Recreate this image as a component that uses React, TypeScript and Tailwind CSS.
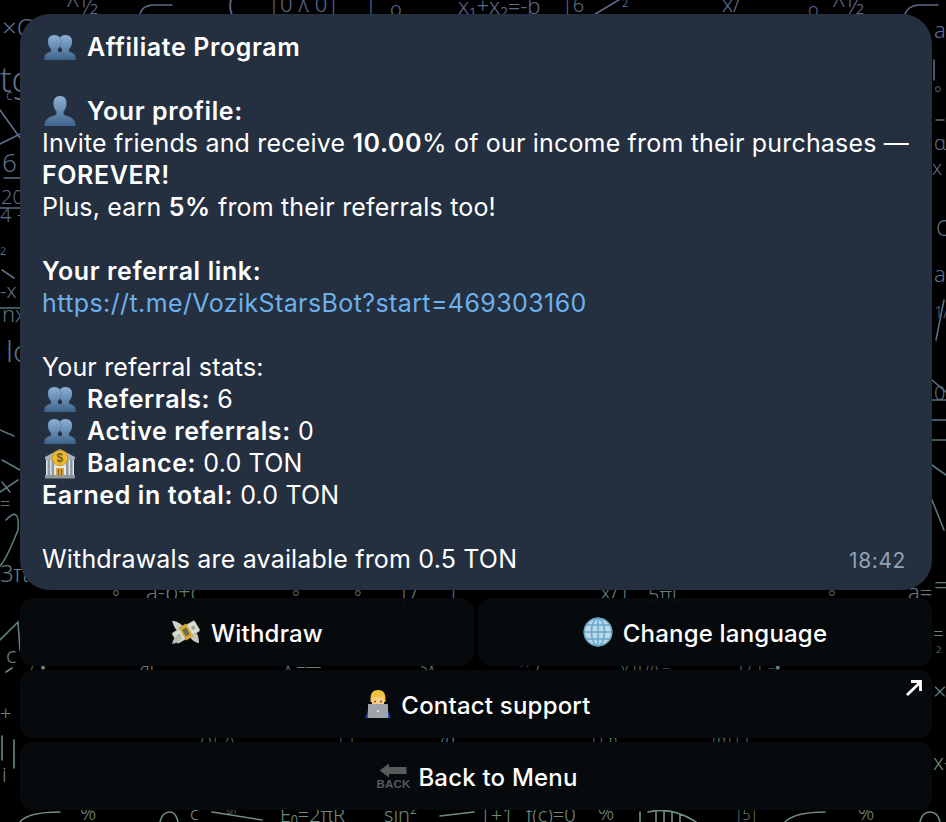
import React from 'react';

const FONT = "font-['Inter','Liberation_Sans',sans-serif]";

// [x, y, text, size]
const doodleTexts: [number, number, string, number][] = [
  [66, 14, '^½ˉ', 24], [228, 14, '(', 30], [268, 12, '|0 λ 0|', 22], [358, 10, '⁻|', 22],
  [390, 16, 'o', 20], [458, 14, 'x₁+x₂=-b', 22], [562, 12, '|6', 20], [622, 14, '²', 18],
  [722, 12, 'x/', 22], [808, 16, 'o', 18], [832, 14, '^½ˉ', 24],
  [2, 37, '×O', 26], [0, 92, 'tg', 34], [6, 100, 'c', 14], [2, 172, '6', 26],
  [1, 204, '20', 20], [0, 222, '4 +', 20], [0, 262, '²', 18], [0, 298, '-x', 20],
  [2, 322, 'nx', 22], [6, 362, 'lo', 30], [0, 582, '3π', 24], [0, 510, '=', 18],
  [6, 663, 'c', 22], [0, 720, '+', 20], [2, 782, 'i', 20],
  [934, 38, 'a', 22], [934, 100, '°', 18], [934, 150, 'ɑ', 20], [932, 175, 'x', 20],
  [936, 236, 'C', 22], [934, 282, 'a', 22], [934, 318, '1/', 16], [934, 400, '0', 20],
  [934, 594, '=b', 24], [933, 640, '=', 18], [936, 660, '²', 16], [933, 700, '×', 24],
  [933, 770, 'x-', 22], [112, 604, '°', 18], [146, 600, 'a-b+c', 22], [292, 604, '°', 18],
  [354, 604, '°', 18], [398, 602, '|/', 22], [448, 600, '|ʼ', 20], [600, 600, 'x/|ʼʼ', 22],
  [648, 602, '5πL', 20], [828, 604, '°', 18], [908, 600, 'a=', 22],
  [30, 672, '/ʼ ▪.', 14], [140, 672, 'ar', 18], [284, 672, 'x =—', 16], [420, 672, 'sx', 16],
  [520, 672, '^ ʼ/', 16], [620, 672, '\\/ ɑ /Λ.=', 14], [740, 672, '( / | =▪', 14],
  [200, 745, '/ɔ| ʼ/\\ʼ', 14], [330, 745, '. | |', 14], [440, 745, '/ɑ', 16], [590, 745, '|| b', 14],
  [710, 745, '|ɑ||ʼ|', 14], [80, 820, '%', 20], [190, 820, 'c', 18], [222, 818, '⁻ˢⁿ', 14],
  [280, 822, 'E₀=2πR', 20], [384, 822, 'sin²', 20], [480, 822, '|+1', 20], [526, 822, 'f(c)=0', 20],
  [598, 820, '%', 20], [735, 820, '|5|', 14], [858, 820, '%', 20],
];

const doodlePaths = [
  'M140 14 Q142 6 152 5 L172 5', 'M905 14 Q908 6 918 5 L938 5', 'M582 22 L622 -2',
  'M0 110 L20 138', 'M0 144 L20 134', 'M4 178 L20 178', 'M0 208 L22 208', 'M2 270 L14 278', 'M0 308 L20 308',
  'M2 460 L20 470', 'M2 482 L10 492 M0 492 L18 480', 'M6 520 Q20 505 18 530 Q6 560 0 566', 'M0 430 L14 436',
  'M0 640 L18 622 L20 650 M6 672 L12 668', 'M2 736 V760 M14 740 V768',
  'M20 822 Q28 812 60 812 M785 822 Q795 812 825 812',
  'M160 822 Q162 812 170 812 Q176 812 178 822', 'M920 822 Q922 812 930 812 Q938 812 940 822', 'M212 812 L262 820',
  'M440 816 L474 812', 'M640 812 V822 M648 812 Q672 806 696 822 M656 812 V822 M664 812 V822 M672 812 V822 M680 814 V822',
  'M932 380 L946 392 M932 400 H946 M932 420 H946 M932 440 H946 M932 465 L946 475 M932 500 L944 530',
  'M934 60 V80 M936 120 H944 M936 340 L944 300',
];

function Doodles() {
  return (
    <svg className="absolute inset-0 w-full h-full" viewBox="0 0 946 822" fill="none">
      <defs>
        <linearGradient id="dg" gradientUnits="userSpaceOnUse" x1="0" y1="0" x2="0" y2="822">
          <stop offset="0" stopColor="#5d6b8c" />
          <stop offset="0.5" stopColor="#567282" />
          <stop offset="1" stopColor="#6f8f80" />
        </linearGradient>
      </defs>
      {doodlePaths.map((d, i) => (
        <path key={i} d={d} stroke="url(#dg)" strokeWidth="1.6" strokeLinecap="round" />
      ))}
      {doodleTexts.map(([x, y, t, s], i) => (
        <text key={i} x={x} y={y} fontSize={s} fontFamily="Noto Sans, sans-serif" fontWeight="300" fill="url(#dg)">
          {t}
        </text>
      ))}
    </svg>
  );
}

const Emoji = ({ children }: { children: React.ReactNode }) => (
  <svg viewBox="0 0 32 32" className="inline-block w-[32px] h-[32px] align-[-7px] mr-[11px] ml-[2px]">
    {children}
  </svg>
);

const bustPath = 'M10.5 4 C5 4 3.5 8 4 12 C4.4 15 5.5 16.6 7 18 L7 20.4 C4.5 21.6 1.2 22 0.6 25 L0.4 29 H20.6 L20.4 25 C19.8 22 16.5 21.6 14 20.4 L14 18 C15.5 16.6 16.6 15 17 12 C17.5 8 16 4 10.5 4Z';

function BustsIcon({ id }: { id: string }) {
  return (
    <Emoji>
      <defs>
        <linearGradient id={id} x1="0" y1="0" x2="0" y2="1">
          <stop offset="0" stopColor="#8db2d6" />
          <stop offset="1" stopColor="#3f648c" />
        </linearGradient>
      </defs>
      <path d={bustPath} fill={`url(#${id})`} transform="translate(11 0)" />
      <path d={bustPath} fill={`url(#${id})`} stroke="#34506f" strokeWidth="0.3" />
    </Emoji>
  );
}

function BustIcon() {
  return (
    <Emoji>
      <defs>
        <linearGradient id="one" x1="0" y1="0" x2="0" y2="1">
          <stop offset="0" stopColor="#8db2d6" />
          <stop offset="1" stopColor="#3f648c" />
        </linearGradient>
      </defs>
      <path
        d="M16 1 C10.5 1 9 5.5 9.6 10 C10 13 11 15 12.4 16.4 L12.4 19.5 C8 21.5 2.5 22.5 1 27 L0.4 31 H31.6 L31 27 C29.5 22.5 24 21.5 19.6 19.5 L19.6 16.4 C21 15 22 13 22.4 10 C23 5.5 21.5 1 16 1Z"
        fill="url(#one)"
      />
    </Emoji>
  );
}

function BankIcon() {
  return (
    <Emoji>
      <path d="M1 10 L16 2 L31 10 V12.5 H1Z" fill="#a9b3b8" />
      <rect x="1" y="28" width="30" height="3.5" fill="#8d979c" />
      <rect x="2" y="12.5" width="28" height="15.5" fill="#e3e8e9" />
      {[3.5, 7.5, 22, 26].map((x) => (
        <rect key={x} x={x} y="13" width="2.6" height="15" fill="#8e9a9f" />
      ))}
      <rect x="12" y="21" width="8" height="7.5" fill="#e0a52c" />
      <rect x="14" y="22" width="1.2" height="6.5" fill="#77624a" />
      <rect x="17" y="22" width="1.2" height="6.5" fill="#77624a" />
      <circle cx="16" cy="11" r="7.8" fill="#f0b92f" stroke="#c98f1c" strokeWidth="0.8" />
      <text x="16" y="15.3" textAnchor="middle" fontSize="12" fontWeight="700" fontFamily="Liberation Sans, sans-serif" fill="#7c5a12">$</text>
    </Emoji>
  );
}

function MoneyWingsIcon() {
  return (
    <svg viewBox="0 0 32 28" className="w-[30px] h-[26px] shrink-0">
      <path d="M1 2 Q10 3 15 11 L9 16 Q3 10 1 2Z" fill="#cfd3c6" />
      <path d="M18 15 L25 11 Q30 17 30 26 Q21 24 18 15Z" fill="#c4c9ba" />
      <g transform="rotate(-30 16 14)">
        <rect x="2" y="7.5" width="28" height="13" rx="1.5" fill="#d8ddcf" stroke="#8d9484" strokeWidth="0.6" />
        <circle cx="7" cy="14" r="2.2" fill="#9da491" />
        <circle cx="25" cy="14" r="2.2" fill="#9da491" />
        <rect x="11.5" y="6" width="9" height="16" fill="#d7a63a" />
        <rect x="13.5" y="10" width="5" height="8" fill="#6a6a4d" />
      </g>
      <path d="M1 27 Q2 20 8 17 L12 21 Q8 26 1 27Z" fill="#b8bdae" />
    </svg>
  );
}

function GlobeIcon() {
  return (
    <svg viewBox="0 0 30 30" className="w-[30px] h-[30px] shrink-0">
      <circle cx="15" cy="15" r="14.2" fill="#bcd8e8" />
      <g fill="none" stroke="#67a6cb" strokeWidth="1.5">
        <circle cx="15" cy="15" r="13.8" />
        <ellipse cx="15" cy="15" rx="6.5" ry="13.8" />
        <path d="M15 1 V29 M1 15 H29 M3.5 8 H26.5 M3.5 22 H26.5" />
      </g>
    </svg>
  );
}

function TechnologistIcon() {
  return (
    <svg viewBox="0 0 26 30" className="w-[26px] h-[30px] shrink-0">
      <path d="M0.5 29 L3 21 L23 21 L25.5 29Z" fill="#2d46c4" />
      <path d="M5.5 10 C5.5 4 8 1 13 1 C18 1 20.5 4 20.5 10 L20.5 13 H5.5Z" fill="#f2c13c" />
      <path d="M7 9 Q13 6.5 19 9 V15 C19 18 16 20 13 20 C10 20 7 18 7 15Z" fill="#f8cf87" />
      <circle cx="10" cy="12.5" r="0.9" fill="#5c3b1e" />
      <circle cx="16" cy="12.5" r="0.9" fill="#5c3b1e" />
      <rect x="3" y="15" width="20" height="14" rx="0.8" fill="#a0a4aa" />
      <circle cx="13" cy="22" r="1.1" fill="#eceef0" />
    </svg>
  );
}

function BackIcon() {
  return (
    <span className="flex flex-col items-center w-[30px] shrink-0">
      <svg viewBox="0 0 28 15" className="w-[28px] h-[15px]">
        <path d="M0.5 7.5 L10 0.5 V4 H27.5 V11 H10 V14.5Z" fill="#585b5c" />
      </svg>
      <span className="font-['Liberation_Sans',sans-serif] text-[11.5px] leading-[12px] font-bold text-[#585b5c]">BACK</span>
    </span>
  );
}

const Bold = ({ children }: { children: React.ReactNode }) => (
  <strong className="font-semibold tracking-[0.6px]">{children}</strong>
);

function KeyButton({ children, className = '' }: { children: React.ReactNode; className?: string }) {
  return (
    <button className={`relative flex-1 h-[68px] rounded-[14px] bg-[#070b0d]/95 flex items-center justify-center gap-[10px] text-white text-[24px] font-medium tracking-[0.2px] leading-[30px] ${className}`}>
      {children}
    </button>
  );
}

const Label = ({ children }: { children: React.ReactNode }) => <span className="pt-[3px]">{children}</span>;

export default function App() {
  return (
    <div className={`relative w-[946px] h-[822px] overflow-hidden bg-black ${FONT}`}>
      <Doodles />
      <div className="relative pl-[20px] pr-[14px] pt-[14px] flex flex-col">
        <div className="bg-[#242f3f] rounded-[30px] pl-[22px] pr-[12px] pt-[17px] pb-[15px] text-white text-[25px] leading-[32px] tracking-[0.18px]">
          <div><BustsIcon id="a1" /><Bold>Affiliate Program</Bold></div>
          <div className="h-[32px]" />
          <div><BustIcon /><Bold>Your profile:</Bold></div>
          <div>
            Invite friends and receive <Bold>10.00</Bold>% of our income from their purchases — <Bold>FOREVER!</Bold>
          </div>
          <div>Plus, earn <Bold>5%</Bold> from their referrals too!</div>
          <div className="h-[32px]" />
          <div><Bold>Your referral link:</Bold></div>
          <div className="text-[#6cb1ec] tracking-[0.4px]">https://t.me/VozikStarsBot?start=469303160</div>
          <div className="h-[32px]" />
          <div>Your referral stats:</div>
          <div><BustsIcon id="a2" /><Bold>Referrals:</Bold> 6</div>
          <div><BustsIcon id="a3" /><Bold>Active referrals:</Bold> 0</div>
          <div><BankIcon /><Bold>Balance:</Bold> 0.0 TON</div>
          <div><Bold>Earned in total:</Bold> 0.0 TON</div>
          <div className="h-[32px]" />
          <div className="flex items-end justify-between pr-[14px]">
            <span>Withdrawals are available from 0.5 TON</span>
            <span className="text-[21px] leading-[28px] tracking-[0.6px] text-[#91a1b5]">18:42</span>
          </div>
        </div>
        <div className="mt-[8px] flex flex-col gap-[4px]">
          <div className="flex gap-[4px]">
            <KeyButton><MoneyWingsIcon /><Label>Withdraw</Label></KeyButton>
            <KeyButton><GlobeIcon /><Label>Change language</Label></KeyButton>
          </div>
          <KeyButton className="flex-none w-full pl-[4px]">
            <TechnologistIcon /><Label>Contact support</Label>
            <svg viewBox="0 0 16 16" className="absolute right-[10px] top-[10px] w-[16px] h-[16px]" fill="none" stroke="#fff" strokeWidth="2.8">
              <path d="M1 15 L14 2.5 M5 1.5 H14.5 V11" />
            </svg>
          </KeyButton>
          <KeyButton className="flex-none w-full pl-[4px]"><BackIcon /><Label>Back to Menu</Label></KeyButton>
        </div>
      </div>
    </div>
  );
}
